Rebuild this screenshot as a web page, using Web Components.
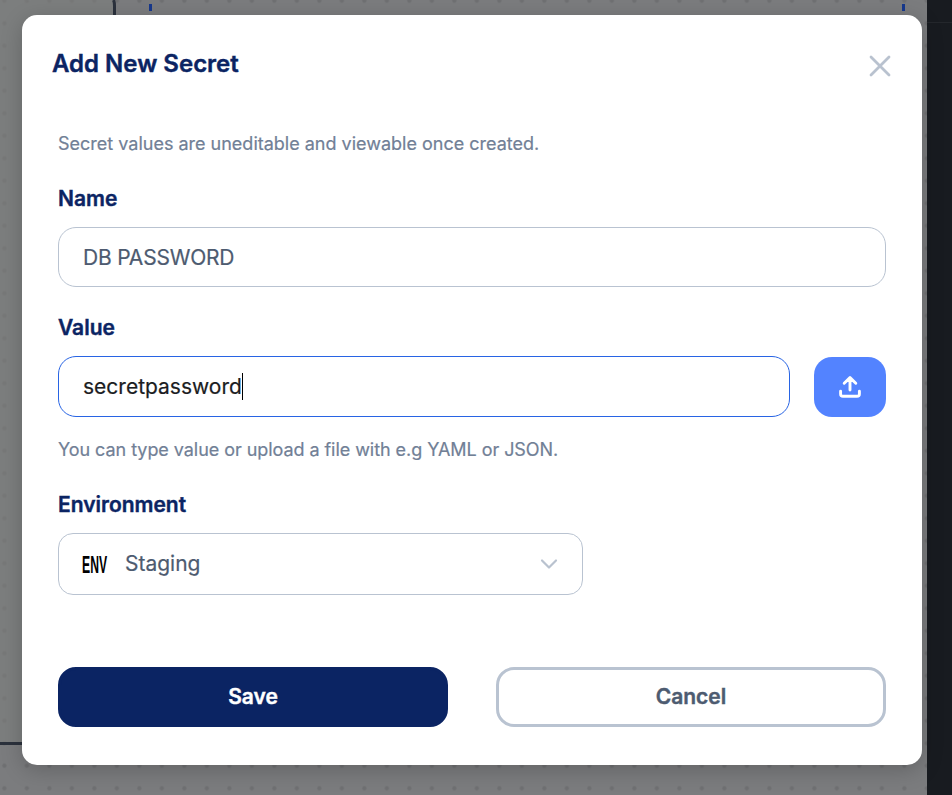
<!DOCTYPE html>
<html lang="en"><head><meta charset="utf-8"><title>Add New Secret</title>
<style>html,body{margin:0;height:100%;overflow:hidden}body{font-family:Inter,"Liberation Sans",sans-serif}</style></head>
<body>
<canvas-backdrop>
<secret-dialog heading="Add New Secret">
<p-note>Secret values are uneditable and viewable once created.</p-note>
<form-field label="Name" style="margin-top:28px"><text-box style="--h:60px;letter-spacing:-.2px">DB PASSWORD</text-box></form-field>
<form-field label="Value" style="margin-top:26px"><text-box active style="--h:61px">secretpassword</text-box><upload-button></upload-button></form-field>
<p-note style="margin-top:21px;letter-spacing:-.055px">You can type value or upload a file with e.g YAML or JSON.</p-note>
<form-field label="Environment" style="margin-top:28px"><select-box>Staging</select-box></form-field>
<action-button slot="actions" primary>Save</action-button>
<action-button slot="actions">Cancel</action-button>
</secret-dialog>
</canvas-backdrop>
<script>
const define=(name,html)=>customElements.define(name,class extends HTMLElement{
 constructor(){super();this.attachShadow({mode:'open'}).innerHTML=html;}
 connectedCallback(){for(const e of this.shadowRoot.querySelectorAll('[data-attr]'))e.textContent=this.getAttribute(e.dataset.attr);}
});
define('canvas-backdrop',`<style>:host{display:block;position:relative;box-sizing:border-box;width:952px;height:795px;padding:15px 0 0 22px;background:#7b7c7e;overflow:hidden}
.scene{position:absolute;left:0;top:0}</style>
<svg class="scene" width="952" height="795"><defs><pattern id="d" width="22.5" height="22.5" patternUnits="userSpaceOnUse" x="-6.9" y="-10.5"><circle cx="11.25" cy="11.25" r="2.2" fill="#6f7072"/></pattern></defs>
<rect width="952" height="795" fill="url(#d)"/><rect width="114" height="743" fill="#7d807d" fill-opacity=".55"/>
<path d="M113.5 0Q114.5 2 114.5 6V30M0 743.5H40" stroke="#2b313c" stroke-width="3" fill="none"/>
<path d="M149 4h3v7h-3zM902 4h3v7h-3z" fill="#17388c"/><rect x="927" width="25" height="795" fill="#181b20"/><path d="M927 22.5h25" stroke="#24272c"/></svg><slot></slot>`);
define('secret-dialog',`<style>:host{display:flex;flex-direction:column;position:relative;box-sizing:border-box;width:900px;height:750px;background:#fff;border-radius:15px;box-shadow:0 5px 22px rgba(0,0,0,.2);padding:0 36px 38px}
header{display:flex;justify-content:space-between;margin:0 -6px 0 -6px;height:117px}
h2{margin:33px 0 0;font-size:24px;line-height:31px;font-weight:600;color:#0b2463;-webkit-text-stroke:.4px}
header svg{margin:39px 0 0}footer{display:flex;gap:48px;margin-top:auto}</style>
<header><h2 data-attr="heading"></h2><svg width="24" height="24" fill="none" stroke="#b9c2cf" stroke-width="2.8" stroke-linecap="round"><path d="M3 3 21 21M21 3 3 21"/></svg></header><slot></slot><footer><slot name="actions"></slot></footer>`);
define('p-note',`<style>:host{display:block;font-size:18px;line-height:24px;color:#718096;white-space:nowrap;-webkit-text-stroke:.2px}</style><slot></slot>`);
define('form-field',`<style>:host{display:block}label{display:block;font-size:21px;line-height:30px;font-weight:600;color:#0b2463;margin-bottom:13px;-webkit-text-stroke:.4px}.r{display:flex;align-items:flex-end;gap:24px}</style><label data-attr="label"></label><div class="r"><slot></slot></div>`);
define('text-box',`<style>:host{display:flex;flex:1;align-items:center;box-sizing:border-box;height:var(--h);border:1px solid #b9c3d1;border-radius:18px;padding:0 24px;font-size:21px;color:#4d5b70;white-space:nowrap;-webkit-text-stroke:.2px}
:host([active]){border-color:#2864e4;color:#1b1d22}i{display:none;width:1px;height:27px;background:#000}:host([active]) i{display:block}</style><span><slot></slot></span><i></i>`);
define('upload-button',`<style>:host{display:flex;align-items:center;justify-content:center;width:72px;height:60px;background:#5383ff;border-radius:18px}</style><svg width="24" height="24" fill="none" stroke="#fff" stroke-width="2.9" stroke-linecap="round" stroke-linejoin="round"><path d="M12 15V3M6.2 8.3 12 2.6 17.8 8.3M2.6 16.2V19Q2.6 21.3 5 21.3H19Q21.4 21.3 21.4 19V16.2"/></svg>`);
define('select-box',`<style>:host{display:flex;align-items:center;box-sizing:border-box;width:525px;height:62px;border:1px solid #b9c3d1;border-radius:15px;padding:0 23px 0 24px;font-size:21px;color:#4d5b70;-webkit-text-stroke:.2px}
.v{flex:1;padding-bottom:2px}svg{display:block;overflow:visible}b{display:block;width:42px;height:26px;font:700 23px/26px "Liberation Sans Narrow","Liberation Sans",sans-serif;color:#000;-webkit-text-stroke:0}b span{display:inline-block;transform-origin:0 50%;transform:translate(-1px,.5px) scaleX(.53)}</style><b><span>ENV</span></b><span class="v"><slot></slot></span><svg width="20" height="14" fill="none" stroke="#b9c2cf" stroke-width="2.2" stroke-linecap="round" stroke-linejoin="round"><path d="M3 3.5 10 10.5 17 3.5"/></svg>`);
define('action-button',`<style>:host{display:flex;flex:1;align-items:center;justify-content:center;box-sizing:border-box;height:60px;border:3px solid #b9c3d1;border-radius:18px;padding-bottom:2px;font-size:21px;font-weight:600;color:#4d5b70;-webkit-text-stroke:.4px}
:host([primary]){background:#0b2463;border-color:#0b2463;color:#fff}</style><slot></slot>`);
</script></body></html>
